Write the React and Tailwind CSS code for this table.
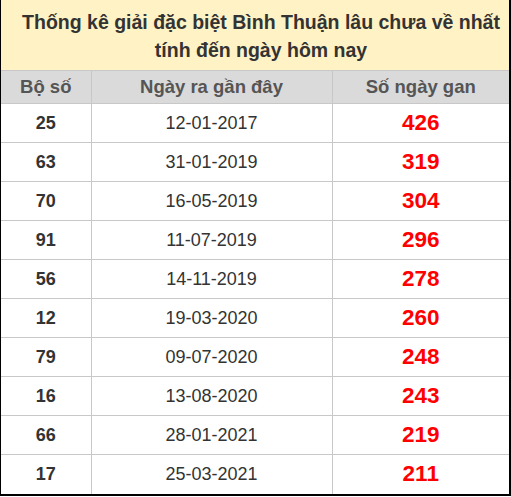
import React from "react";

const rows = [
  ["25", "12-01-2017", "426"],
  ["63", "31-01-2019", "319"],
  ["70", "16-05-2019", "304"],
  ["91", "11-07-2019", "296"],
  ["56", "14-11-2019", "278"],
  ["12", "19-03-2020", "260"],
  ["79", "09-07-2020", "248"],
  ["16", "13-08-2020", "243"],
  ["66", "28-01-2021", "219"],
  ["17", "25-03-2021", "211"],
];

const App = () => {
  return (
    <div className="w-[511px] h-[497px] bg-white" style={{ fontFamily: '"Liberation Sans", Arial, sans-serif' }}>
      <div className="w-[511px] border-l border-r-2 border-b-2 border-black">
        <div className="h-[70px] bg-[#fff2c4] flex flex-col items-center justify-center text-[19.5px] leading-[28px] font-bold text-[#333] pl-[12px] pt-[1px]">
          <div>Thống kê giải đặc biệt Bình Thuận lâu chưa về nhất</div>
          <div>tính đến ngày hôm nay</div>
        </div>
        <table className="w-full border-collapse">
          <thead>
            <tr className="h-[33px] bg-[#dadada] text-[18.5px] font-bold text-[#555]">
              <th className="w-[90px] border-r border-t border-[#c8c8c8] font-bold">Bộ số</th>
              <th className="w-[241px] border-r border-t border-[#c8c8c8] font-bold">Ngày ra gần đây</th>
              <th className="border-t border-[#c8c8c8] font-bold">Số ngày gan</th>
            </tr>
          </thead>
          <tbody>
            {rows.map((r, i) => (
              <tr key={i} className="h-[39px] border-t border-[#c8c8c8]">
                <td className="border-r border-[#c8c8c8] text-center text-[18px] font-bold text-[#333]">{r[0]}</td>
                <td className="border-r border-[#c8c8c8] text-center text-[18px] text-[#333]">{r[1]}</td>
                <td className="text-center text-[22.5px] font-bold text-[#ff0000]">{r[2]}</td>
              </tr>
            ))}
          </tbody>
        </table>
      </div>
    </div>
  );
};

export default App;
